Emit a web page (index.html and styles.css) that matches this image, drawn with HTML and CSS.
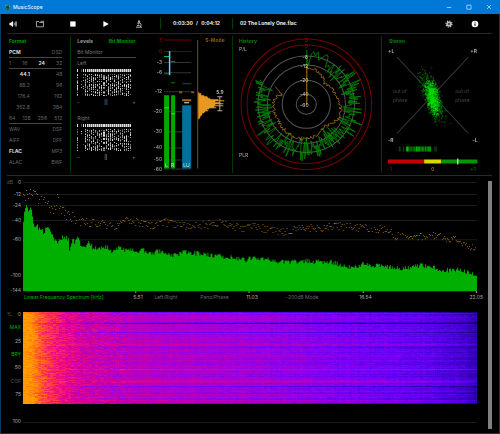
FILE: index.html
```html
<!DOCTYPE html>
<html lang="en">
<head>
<meta charset="utf-8">
<title>MusicScope</title>
<link rel="stylesheet" href="styles.css">
</head>
<body>
<div class="window">
  <header class="titlebar">
    <svg class="logo" viewBox="0 0 8 8" aria-hidden="true"><circle cx="4" cy="4" r="3.6" fill="#1d8a8a"/><path d="M2 5.5 3.2 2 4 5l1-3 .6 4M3 6.5h2" fill="none" stroke="#06333f" stroke-width=".9"/><path d="M1.4 2.4 3 1.4M5.8 2l.9 1.4" stroke="#7fe0c0" stroke-width=".6"/></svg>
    <h1 class="app-name">MusicScope</h1>
    <button class="win-btn" aria-label="Minimize"><svg viewBox="0 0 6 6"><path d="M.8 3.5h4.4" /></svg></button>
    <button class="win-btn" aria-label="Maximize"><svg viewBox="0 0 6 6"><path d="M.8 1.2h4.2v4H.8z"/></svg></button>
    <button class="win-btn" aria-label="Close"><svg viewBox="0 0 6 6"><path d="M1 1l4 4M5 1 1 5"/></svg></button>
  </header>

  <nav class="toolbar">
    <button class="tool tool-first" aria-label="Volume"><svg viewBox="0 0 8 8"><path d="M.4 2.8h1.4L4 1v6L1.8 5.2H.4z" fill="#eee"/><path d="M4.9 2.6q1 1.4 0 2.8M6 1.8q1.6 2.2 0 4.4M7 1.2q1.6 2.8 0 5.6" fill="none" stroke="#ddd" stroke-width=".7"/></svg></button>
    <button class="tool" aria-label="Open"><svg viewBox="0 0 8 8"><path d="M.5 6.8v-5.300h2.400l.6 1h4v4.300zM4.500 1.300h3v1.200" fill="none" stroke="#ddd" stroke-width=".7"/></svg></button>
    <button class="tool" aria-label="Stop"><svg viewBox="0 0 8 8"><path d="M1.200 1.400h5.400v5.200H1.200z" fill="#fff"/></svg></button>
    <button class="tool" aria-label="Play"><svg viewBox="0 0 8 8"><path d="M1.400 1 6.800 4 1.400 7z" fill="#fff"/></svg></button>
    <button class="tool" aria-label="Analyze"><svg viewBox="0 0 8 8"><path d="M1 7.200h6M2 5.600h2.600M3.800.6 2.800 3.600l1 .5 1-3zM4.800 2.600q2.200 1 .8 4.400" fill="none" stroke="#ddd" stroke-width=".8"/></svg></button>
    <div class="times"><time>0:03:30</time><span>/</span><time>0:04:12</time></div>
    <div class="track">02 The Lonely One.flac</div>
    <button class="tool tool-end" aria-label="Settings"><svg viewBox="0 0 8 8"><circle cx="4" cy="4" r="2.6" fill="#bbb"/><circle cx="4" cy="4" r="3" fill="none" stroke="#ccc" stroke-width="1.2" stroke-dasharray="1.2 1.15"/><circle cx="4" cy="4" r="1" fill="#333"/></svg></button>
    <button class="tool tool-end" aria-label="Information"><svg viewBox="0 0 8 8"><circle cx="4" cy="4" r="3.3" fill="#fff"/><path d="M4 3.5v2.4M4 1.800v.9" stroke="#000" stroke-width="1"/></svg></button>
  </nav>

  <main>
    <div class="panels">
      <section class="panel format">
        <h2>Format</h2>
        <div class="row ruled"><b>PCM</b><span>DSD</span></div>
        <div class="row ruled"><span>1</span><span>16</span><b>24</b><span>32</span></div>
        <table class="rates">
          <tr><td class="on">44.1</td><td>48</td></tr>
          <tr><td>88.2</td><td>96</td></tr>
          <tr><td>176.4</td><td>192</td></tr>
          <tr><td>352.8</td><td>384</td></tr>
        </table>
        <div class="row ruled"><span>64</span><span>128</span><span>256</span><span>512</span></div>
        <div class="row"><span>WAV</span><span>DSF</span></div>
        <div class="row"><span>AIFF</span><span>DFF</span></div>
        <div class="row"><b>FLAC</b><span>MP3</span></div>
        <div class="row"><span>ALAC</span><span>BWF</span></div>
      </section>

      <section class="panel levels">
        <div class="row tabs"><button class="tab">Levels</button><button class="tab active">Bit Monitor</button></div>
        <div class="row ruled"><span>Bit Monitor</span></div>
        <div class="row"><span>Left</span></div>
        <canvas class="bits" width="53" height="28" data-seed="5"></canvas>
        <div class="row steps"><button aria-label="Fewer bits, left">-</button><button aria-label="Pause left">||</button><button aria-label="More bits, left">+</button></div>
        <div class="row second"><span>Right</span></div>
        <canvas class="bits" width="53" height="28" data-seed="9"></canvas>
        <div class="row steps"><button aria-label="Fewer bits, right">-</button><button aria-label="Pause right">||</button><button aria-label="More bits, right">+</button></div>
      </section>

      <section class="panel">
        <svg class="chart" id="meter" viewBox="145 36 86 136">
          <path d="M163 40h27M163 51.5h27" stroke="#700000"/>
          <path d="M163 62.5h27M163 72.5h27M163 91.5h27M163 111.5h27M163 131.5h27M163 147.5h27M163 159.5h27M163 168.5h27" stroke="#333"/>
          <g text-anchor="end" fill="#bbb">
            <text x="161" y="42" fill="#c00000">3</text><text x="161" y="53" fill="#c00000">0</text><text x="161" y="64">-3</text><text x="161" y="74">-6</text><text x="161" y="93">-12</text><text x="161" y="113">-20</text><text x="161" y="133">-30</text><text x="161" y="149">-40</text><text x="161" y="161">-50</text><text x="161" y="170">-60</text>
          </g>
          <path d="M163 95h5v73h-5zM170 95h4v73h-4z" fill="#00a800"/>
          <path d="M163 107.5h5M170 113.5h4" stroke="#00ff00"/>
          <path d="M163 56.5h5" stroke="#00d060"/><path d="M170 61.5h4" stroke="#009050"/><path d="M163 73.5h5M170 82.5h4" stroke="#008000"/>
          <path d="M168.500 51v24" stroke="#60d0f8" stroke-width="1.5"/>
          <path d="M181 105h9v63h-9z" fill="#00709c"/>
          <path d="M181 83.5h9" stroke="#005070"/>
          <path d="M178 92h3M190 92h3" stroke="#8a5810" stroke-width="2"/>
          <path d="M181 100h9" stroke="#a86c10" stroke-width="2"/><path d="M183 102.5h5" stroke="#eee"/>
          <g fill="#c8e8c8"><text x="164" y="166">L</text><text x="170" y="166">R</text><text x="182" y="166">LU</text></g>
          <path d="M196.5 40v128" stroke="#7a5010"/>
          <text class="strong" x="204" y="42" fill="#8a5c10">S-Mode</text>
          <path id="distribution" fill="#e89820"/>
          <path d="M218.5 96v15M216 96.5h5M216 110.5h5" stroke="#aaa" fill="none"/>
          <text x="215" y="94" fill="#ddd">5.9</text>
        </svg>
      </section>

      <section class="panel ruled-left">
        <svg class="chart" id="history" viewBox="233 36 147 136">
          <g fill="none"><circle cx="306" cy="104" r="65" stroke="#780000"/><circle cx="306" cy="104" r="59" stroke="#780000"/>
          <circle cx="306" cy="104" r="48" stroke="#555"/><circle cx="306" cy="104" r="39" stroke="#555"/><circle cx="306" cy="104" r="24" stroke="#555"/><circle cx="306" cy="104" r="10" stroke="#555"/></g>
          <path id="peak" fill="none" stroke="#008a00" stroke-width=".8"/>
          <path id="loud" fill="none" stroke="#a87018" stroke-width=".8"/>
          <path d="M306.5 105V66" stroke="#b87818"/><path d="M306.5 66V50" stroke="#008000"/>
          <g text-anchor="middle" fill="#ccc"><text x="306" y="42" fill="#c00000">3</text><text x="306" y="48" fill="#c00000">0</text><text x="305" y="59">-6</text><text x="304" y="68">-12</text><text x="304" y="82">-20</text><text x="304" y="96">-40</text><text x="304" y="107">-60</text></g>
          <text class="strong" x="239" y="43" fill="#008400">History</text>
          <text x="239" y="51" fill="#aaa">P/L</text><text x="239" y="157" fill="#aaa">PLR</text>
        </svg>
      </section>

      <section class="panel ruled-left">
        <svg class="chart" id="stereo" viewBox="382 36 117 136">
          <path d="M397 57l71 76M468 57l-71 76" stroke="#333" fill="none"/>
          <path id="cloud-dim" stroke="#005c00" fill="none"/><path id="cloud" stroke="#009c00" fill="none"/><path id="cloud-hot" stroke="#00d800" fill="none"/>
          <g id="strip"></g>
          <text class="strong" x="389" y="43" fill="#008400">Stereo</text>
          <g class="strong" fill="#aaa"><text x="388" y="53">+L</text><text x="470" y="53">+R</text><text x="388" y="142">-R</text><text x="472" y="142">-L</text></g>
          <g fill="#444"><text x="393" y="93">out of</text><text x="393" y="102">phase</text><text x="455" y="93">out of</text><text x="455" y="102">phase</text></g>
          <path d="M388 159h36v4h-36z" fill="#c00000"/><path d="M424 159h17v4h-17z" fill="#d8d800"/><path d="M441 159h36v4h-36z" fill="#009800"/>
          <path d="M457.5 158v6" stroke="#fff"/>
          <text x="388" y="170" fill="#a00000">-1</text><text x="431" y="170" fill="#b0b000">0</text><text x="470" y="170" fill="#008400">+1</text>
        </svg>
      </section>
    </div>

    <div class="lower">
      <div class="plots">
        <svg class="chart" id="spectrum" viewBox="1 176 486 117">
          <path d="M23 182.5h453M23 194.5h453M23 205.5h453M23 220.5h453M23 239.5h453" stroke="#1c1c1c"/>
          <g text-anchor="end" fill="#aaa"><text x="13" y="184" fill="#555">dB</text><text x="21" y="184">0</text><text x="21" y="196">-12</text><text x="21" y="207">-24</text><text x="21" y="222">-40</text><text x="21" y="241">-60</text><text x="21" y="277">-100</text><text x="21" y="292">-144</text></g>
          <path id="dots" stroke="#8c6010" fill="none"/>
          <path id="area" fill="#00b000"/>
          <path d="M135.5 291v2M248.5 291v2M362.5 291v2M475.5 291v2" stroke="#aaa"/>
        </svg>
        <div class="axis-row">
          <button class="mode active">Linear Frequency Spectrum [kHz]</button><span>5.51</span><button class="mode">Left/Right</button><button class="mode">Pano/Phase</button><span>11.03</span><button class="mode">-200dB Mode</button><span>16.54</span><span class="last">22.05</span>
        </div>
        <div class="spectrogram">
          <div class="scale">
            <span><i>%</i>0</span><button class="active">MAX</button><span>25</span><button class="active">BRY</button><span>50</span><button>COF</button><span>75</span><span class="end">100</span>
          </div>
          <div class="field"><canvas id="gram" width="453" height="92"></canvas></div>
        </div>
      </div>
      <div class="scrollbar"></div>
    </div>
  </main>
</div>
<script src="charts.js"></script>
</body>
</html>
```
FILE: styles.css
```css
* { box-sizing: border-box; }
body {
  margin: 0;
  background: #000;
  color: #aaa;
  font: 5px/11px Inter, "Liberation Sans", sans-serif;
}
button {
  padding: 0;
  border: 0;
  background: none;
  color: inherit;
  font: inherit;
}
svg, canvas { display: block; }
h1, h2 { margin: 0; font-size: inherit; }

.window {
  display: flex;
  flex-direction: column;
  min-height: 100vh;
  border: 1px solid #0a3a66;
  border-top: 0;
}
.titlebar {
  display: flex;
  align-items: center;
  height: 14px;
  margin: 0 -1px;
  padding: 0 1px 0 4px;
  background: #0078d7;
}
.logo { width: 7px; height: 7px; }
.app-name {
  flex: 1;
  padding-left: 2px;
  color: #e8f4ff;
  font-weight: 500;
  line-height: 14px;
}
.win-btn { display: grid; place-items: center; width: 20px; height: 14px; }
.win-btn svg { width: 6px; height: 6px; fill: none; stroke: #b8dcff; stroke-width: 0.8; }

.toolbar {
  display: flex;
  align-items: center;
  height: 20px;
  margin: 0 7px 0 6px;
  border-bottom: 1px solid #004000;
  color: #eee;
  font-weight: bold;
}
.tool { display: grid; place-items: center; width: 33px; height: 18px; }
.tool svg { width: 8px; height: 8px; }
.tool-first { justify-items: start; width: 16px; padding-left: 2px; }
.times {
  display: flex;
  justify-content: space-between;
  width: 73px;
  margin-left: 5px;
  padding: 0 12px;
  border: solid #004000;
  border-width: 0 1px;
}
.track { flex: 1; padding-left: 7px; }
.tool-end { width: 26px; }
.tool-end:last-child { margin-right: 4px; }

main {
  display: flex;
  flex: 1;
  flex-direction: column;
}
.panels {
  position: relative;
  display: grid;
  grid-template-columns: 70fr 74fr 86fr 148fr 118fr;
  padding: 2px 0 3px;
}
.panels::after {
  content: "";
  position: absolute;
  right: 7px;
  bottom: 0;
  left: 6px;
  border-bottom: 1px solid #004800;
}
.panel { min-width: 0; }
.ruled-left { border-left: 1px solid #003800; }
.chart { width: 100%; height: auto; font-size: 5px; }
.strong { font-weight: bold; }

.format { padding: 0 8px; border-right: 1px solid #003800; color: #666; }
.format h2, .tab.active { color: #009800; }
.format b, .rates .on { color: #ddd; font-weight: bold; }
.row { display: flex; justify-content: space-between; height: 11px; }
.ruled { border-bottom: 1px solid #444; }
.rates { width: 100%; border-collapse: collapse; line-height: 11px; }
.rates td { width: 50%; height: 11px; padding: 0; text-align: right; }
.rates td:first-child { width: 32%; }

.levels { padding: 0 10px 0 6px; color: #777; }
.tabs { font-weight: bold; color: #999; }
.bits { width: 92%; height: 28px; image-rendering: pixelated; }
.steps { color: #aaa; }
.second { margin-top: 5px; }

.lower {
  display: flex;
  flex: 1;
  margin-right: 7px;
}
.plots { flex: 1; min-width: 0; }
.scrollbar { width: 4px; margin: 5px 0 4px; background: #808080; }

.axis-row {
  display: grid;
  grid-template-columns: 104fr 19fr 36fr 60fr 14fr 85fr 40fr 96fr;
  height: 8px;
  margin: 0 5px 0 22px;
  line-height: 8px;
  white-space: nowrap;
}
.axis-row > * { display: flex; justify-content: center; min-width: 0; }
.axis-row .active { justify-content: flex-start; padding-left: 1px; color: #00b000; }
.axis-row .last { justify-content: flex-end; }
.mode { color: #666; }

.spectrogram {
  display: grid;
  grid-template-columns: 22px 1fr;
  margin: 11px 11px 0 0;
}
.scale {
  display: grid;
  grid-template-rows: repeat(9, 8px);
  align-content: space-between;
  height: 115px;
  margin-top: -2px;
  padding-right: 2px;
  line-height: 8px;
  text-align: right;
}
.scale > * { text-align: right; }
.scale i { margin-right: 6px; color: #666; font-style: normal; }
.scale button { color: #555; }
.scale .active { color: #00b000; }
.scale .end { grid-row: 9; }
.field { height: 111px; border-bottom: 1px solid #1c1c1c; }
#gram { width: 100%; height: 92px; image-rendering: pixelated; }
```
FILE: charts.js
```js
function makeRandom(seed) {
  return function () {
    seed = (seed * 1664525 + 1013904223) % 4294967296;
    return seed / 4294967296;
  };
}

function interpolate(points, x) {
  for (let i = 1; i < points.length; i++) {
    if (x <= points[i][0]) {
      const [x0, y0] = points[i - 1];
      const [x1, y1] = points[i];
      return y0 + (y1 - y0) * (x - x0) / (x1 - x0);
    }
  }
  return points[points.length - 1][1];
}

const setPath = (id, d) => document.getElementById(id).setAttribute("d", d);

// Bit monitor: one solid row of bits over rows of scattered ones.
document.querySelectorAll(".bits").forEach((canvas) => {
  const random = makeRandom(Number(canvas.dataset.seed));
  const ctx = canvas.getContext("2d");
  for (let x = 0; x < 53; x += 2) {
    if (x === 2) continue;
    const faint = x === 4;
    ctx.fillStyle = faint ? "#444" : "#e0e0e0";
    ctx.fillRect(x, 0, 1, 3);
    ctx.fillStyle = "#777";
    if (x > 8) ctx.fillRect(x + 1, 0, 1, 3);
    for (let y = 5; y < 27; y++) {
      const density = x === 0 ? 0.7 : x < 8 ? 0.1 : 0.65;
      if (random() < density) {
        const v = 70 + Math.floor(random() * 165);
        ctx.fillStyle = `rgb(${v},${v},${v})`;
        ctx.fillRect(x, y, 1, 1);
      }
    }
  }
});

// Loudness distribution, one bar per pixel row.
{
  const widths = [1, 3, 3, 6, 9, 10, 12, 20, 26, 17, 22, 25, 17, 25, 16, 18, 11, 9, 10, 7, 6, 4, 4, 3, 2, 2, 1];
  setPath("distribution", widths.map((w, i) => `M197 ${92 + i}h${w}v1h-${w}z`).join(""));
}

// Loudness history, clockwise from the top.
{
  const random = makeRandom(12);
  let peak = "", loud = "";
  const at = (deg, r) => {
    const a = deg * Math.PI / 180;
    return `${(306 + r * Math.sin(a)).toFixed(1)} ${(104 - r * Math.cos(a)).toFixed(1)}`;
  };
  const peakBase = [[0, 51], [25, 50], [35, 40], [50, 46], [120, 46], [145, 39], [160, 45], [230, 46], [260, 45], [300, 47]];
  for (let d = 1; d <= 298; d += d < 30 ? 2.4 : 0.9) {
    peak += (peak ? "L" : "M") + at(d, interpolate(peakBase, d) + (random() + random() - 1) * 14);
  }
  const loudBase = [[0, 37], [25, 34], [40, 28], [70, 31], [95, 34], [110, 36], [140, 28], [160, 32], [180, 35], [215, 34], [240, 32], [268, 33], [287, 31], [290, 25], [300, 35]];
  for (let d = 1; d <= 300; d += 1.8) {
    loud += (loud ? "L" : "M") + at(d, interpolate(loudBase, d) + (random() - 0.5) * 3.4);
  }
  setPath("peak", peak);
  setPath("loud", loud);
}

// Goniometer cloud.
{
  const random = makeRandom(77);
  const normal = () => random() + random() + random() - 1.5;
  const scatter = (n, cx, cy, length, width, slope) => {
    let d = "";
    for (let i = 0; i < n; i++) {
      const t = normal() * length;
      const x = Math.round(cx + t * slope + normal() * width);
      const y = Math.round(cy + t);
      d += `M${x} ${y}.5h1`;
    }
    return d;
  };
  setPath("cloud-dim", scatter(600, 431, 95, 22, 8, 0.34));
  setPath("cloud", scatter(600, 432, 97, 15, 6, 0.2));
  setPath("cloud-hot", scatter(260, 432, 97, 14, 5, 0.16));

  let bars = "";
  for (let x = 395; x < 437; x++) {
    const edge = x < 406 || x > 430;
    const level = edge ? random() * 90 : 90 + random() * 130;
    if (!edge || random() < 0.7) {
      bars += `<path d="M${x} 146h1v5h-1z" fill="rgb(0,${Math.round(level)},0)"/>`;
    }
  }
  document.getElementById("strip").innerHTML = bars;
}

// Frequency spectrum: current level as an area, peaks as dots.
{
  const random = makeRandom(31);
  const level = [[23, 222], [24, 212], [26, 205], [28, 211], [30, 208], [31, 210], [33, 223], [36, 226], [40, 228], [43, 232], [48, 225], [50, 232], [54, 239], [57, 244], [60, 239], [64, 236], [68, 240], [69, 251], [72, 239], [74, 242], [77, 236], [81, 246], [85, 249], [88, 240], [92, 247], [101, 248], [105, 246], [113, 252], [118, 246], [124, 250], [130, 248], [137, 253], [142, 250], [150, 254], [158, 251], [170, 255], [185, 252], [215, 255], [235, 258], [245, 260], [250, 258], [262, 258], [275, 262], [300, 261], [330, 262], [350, 267], [362, 264], [400, 268], [425, 265], [440, 270], [462, 270], [471, 274], [476, 276]];
  let area = "M23 291";
  for (let x = 23; x < 476; x++) {
    const y = interpolate(level, x) + (random() - 0.5) * (x < 34 ? 1 : 5);
    area += `L${x} ${y.toFixed(1)}h1`;
  }
  setPath("area", area + "V291z");

  const peaks = [[24, 196], [31, 192], [35, 196], [42, 201], [48, 200], [51, 211], [57, 200], [60, 211], [68, 217], [80, 222], [95, 222], [110, 226], [118, 225], [127, 220], [150, 225], [165, 222], [190, 226], [220, 222], [240, 228], [255, 226], [280, 232], [300, 228], [340, 226], [385, 229], [395, 235], [430, 235], [455, 239], [465, 245], [476, 246]];
  let dots = "";
  for (let x = 23; x < 475; x++) {
    const spread = x < 75 ? 13 : 8;
    const y = Math.round(interpolate(peaks, x) + (random() - 0.5) * spread);
    if (random() < 0.9) dots += `M${x} ${y}.5h1`;
  }
  setPath("dots", dots);
}

// Spectrogram: level by frequency, shifted per time slice.
{
  const random = makeRandom(4);
  const canvas = document.getElementById("gram");
  const ctx = canvas.getContext("2d");
  const image = ctx.createImageData(453, 92);
  const base = [[0, 1], [8, 0.95], [16, 0.82], [28, 0.7], [45, 0.59], [65, 0.51], [100, 0.47], [180, 0.42], [250, 0.38], [330, 0.32], [400, 0.27], [440, 0.19], [453, 0.12]];
  const ramp = [[[0, 16], [0.2, 70], [0.3, 110], [0.4, 160], [0.52, 205], [0.62, 240], [0.75, 255], [1, 255]],
    [[0, 0], [0.52, 0], [0.62, 10], [0.75, 60], [0.88, 125], [1, 160]],
    [[0, 110], [0.2, 215], [0.3, 250], [0.4, 220], [0.52, 165], [0.62, 130], [0.75, 70], [0.88, 10], [1, 0]]];
  const marked = { 0: -0.12, 11: -0.26, 10: -0.1, 20: -0.12, 35: -0.07, 36: -0.06, 74: -0.14, 81: -0.08, 91: -0.15, 1: 0.05, 31: 0.06, 32: 0.07, 33: 0.08, 43: 0.05, 57: 0.1, 68: 0.06, 69: 0.08, 70: 0.06, 88: 0.08 };
  const columns = Array.from({ length: 453 }, () => (random() - 0.5) * 0.03);
  for (let y = 0; y < 92; y++) {
    const shift = (marked[y] || 0) + (random() - 0.5) * 0.08;
    let grain = 0;
    for (let x = 0; x < 453; x++) {
      if (x % 3 === 0) grain = (random() - 0.5) * (x < 100 ? 0.15 : 0.06);
      const weight = Math.min(1, 0.15 + x / 130);
      const v = Math.max(0, Math.min(1, interpolate(base, x) + shift * weight + grain + columns[x]));
      const i = (y * 453 + x) * 4;
      for (let c = 0; c < 3; c++) image.data[i + c] = interpolate(ramp[c], v);
      image.data[i + 3] = 255;
    }
  }
  ctx.putImageData(image, 0, 0);
}
```
